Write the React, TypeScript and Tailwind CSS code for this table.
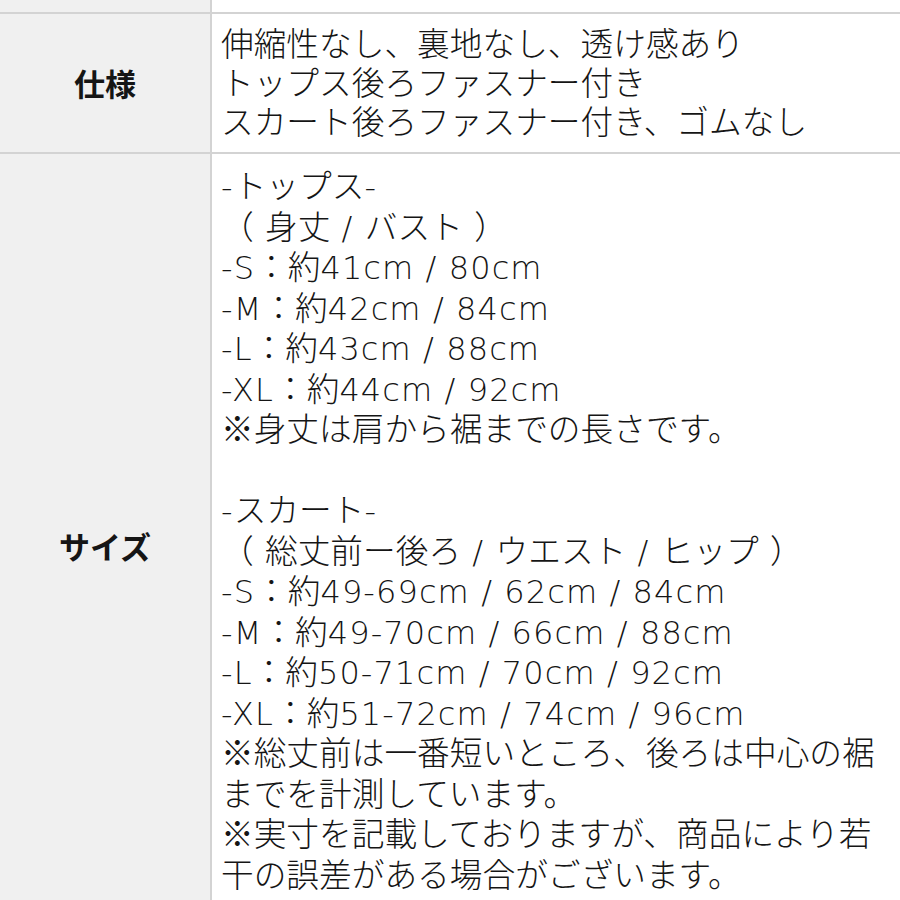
const spec = [
  '伸縮性なし、裏地なし、透け感あり',
  'トップス後ろファスナー付き',
  'スカート後ろファスナー付き、ゴムなし',
];

const sizes = [
  '-トップス-',
  '（ 身丈 / バスト ）',
  '-S：約41cm / 80cm',
  '-M：約42cm / 84cm',
  '-L：約43cm / 88cm',
  '-XL：約44cm / 92cm',
  '※身丈は肩から裾までの長さです。',
  '',
  '-スカート-',
  '（ 総丈前ー後ろ / ウエスト / ヒップ ）',
  '-S：約49-69cm / 62cm / 84cm',
  '-M：約49-70cm / 66cm / 88cm',
  '-L：約50-71cm / 70cm / 92cm',
  '-XL：約51-72cm / 74cm / 96cm',
  '※総丈前は一番短いところ、後ろは中心の裾',
  'までを計測しています。',
  '※実寸を記載しておりますが、商品により若',
  '干の誤差がある場合がございます。',
];

// latin runs get a wider face so the widths come close to the original
function Line({ text }: { text: string }) {
  const parts = text.split(/([\x20-\x7e]+)/);
  return (
    <div className="h-[40.5px] leading-[40.5px] whitespace-pre">
      {text === ''
        ? '\u00a0'
        : parts.map((p, i) =>
            /^[\x20-\x7e]+$/.test(p) ? (
              <span
                key={i}
                className="tracking-[1.1px] text-[32px]"
                style={{ fontFamily: '"DejaVu Sans", sans-serif', fontWeight: 300 }}
              >
                {p}
              </span>
            ) : (
              <span key={i}>{p}</span>
            )
          )}
    </div>
  );
}

export default function App() {
  return (
    <div
      className="w-[900px] h-[900px] overflow-hidden bg-white text-[#151515]"
      style={{ fontFamily: '"Noto Sans CJK JP", "Noto Sans", sans-serif' }}
    >
      <div className="grid grid-cols-[212px_1fr]">
        <div className="h-[12px] bg-[#f0f0f0] border-r-2 border-[#d3d3d3]" />
        <div className="h-[12px]" />

        <div className="h-[140px] bg-[#f0f0f0] border-t-2 border-r-2 border-[#d3d3d3] flex items-center justify-center text-[31px] font-bold">
          仕様
        </div>
        <div className="h-[140px] border-t-2 border-[#d3d3d3] pl-[9px] pt-[8px] text-[32.7px] font-light">
          {spec.map((l, i) => (
            <div key={i} className="h-[39px] leading-[39px] whitespace-nowrap">
              {l}
            </div>
          ))}
        </div>

        <div className="h-[786px] bg-[#f0f0f0] border-t-2 border-r-2 border-[#d3d3d3] flex items-center justify-center text-[31px] font-bold">
          サイズ
        </div>
        <div className="h-[786px] border-t-2 border-[#d3d3d3] pl-[9px] pt-[10px] text-[32.7px] font-light">
          {sizes.map((l, i) => (
            <Line key={i} text={l} />
          ))}
        </div>
      </div>
    </div>
  );
}
